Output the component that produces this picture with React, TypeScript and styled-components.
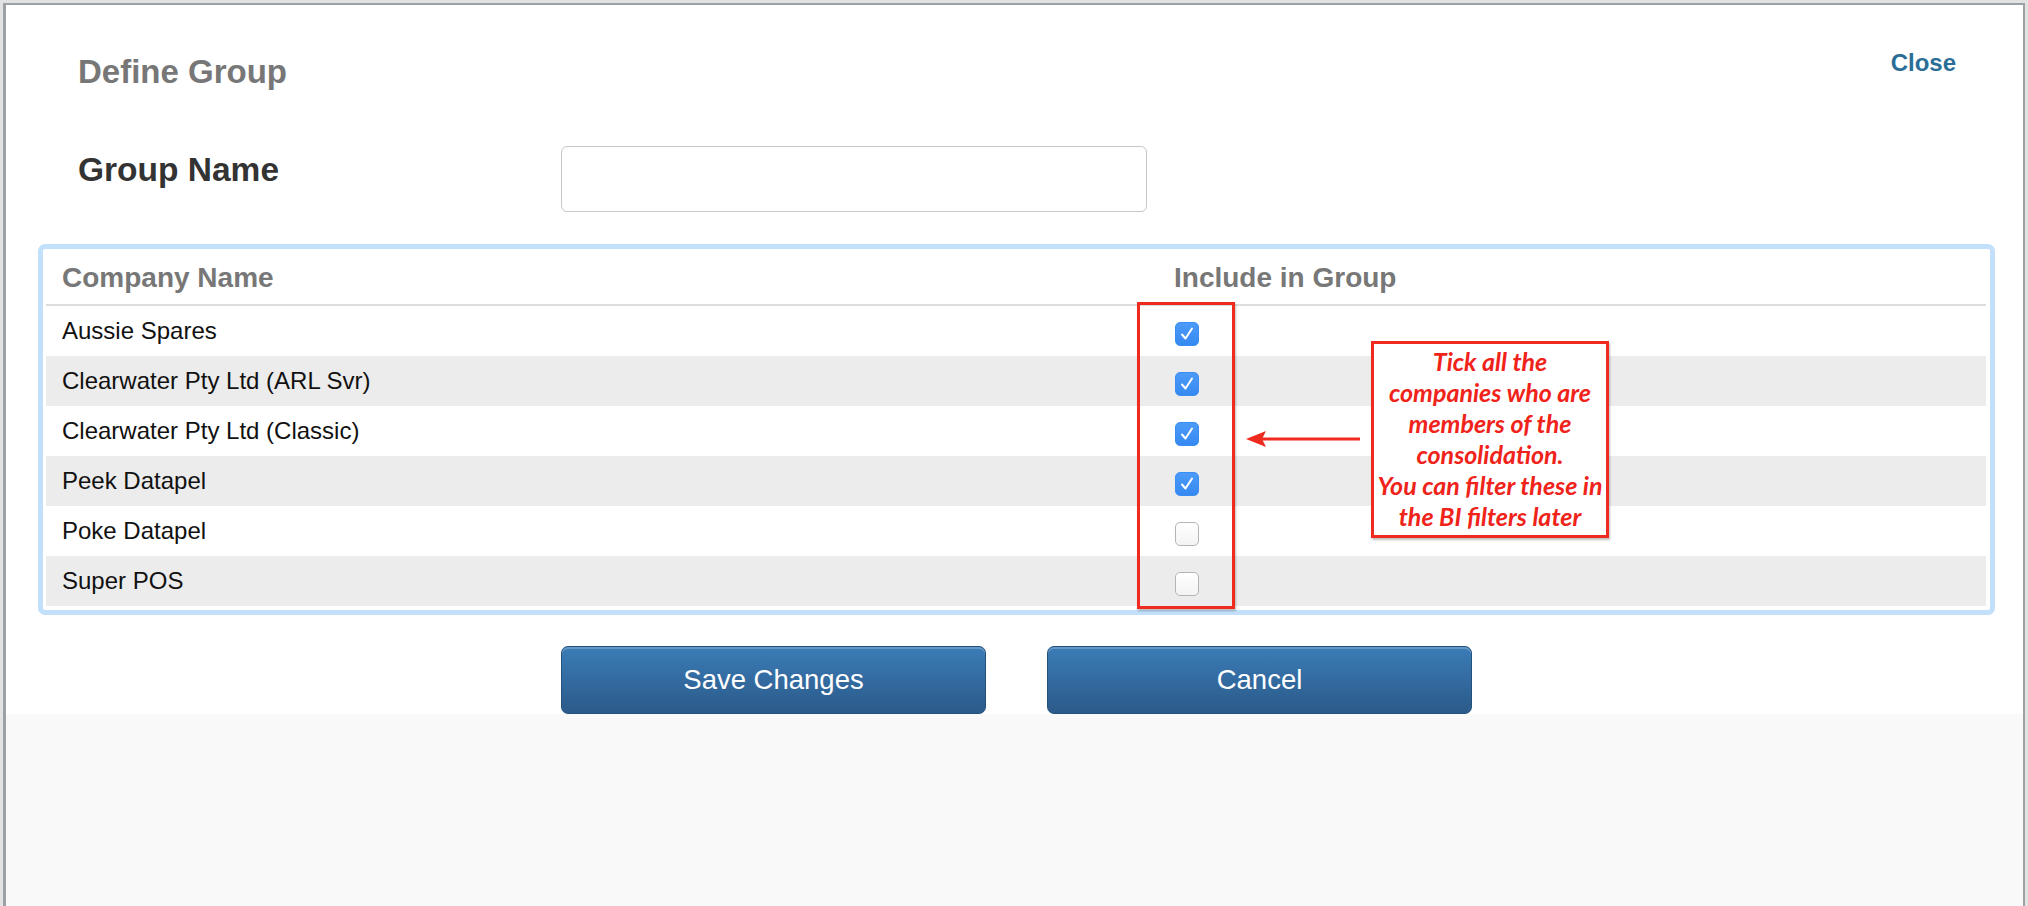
import React from "react";
import styled, { createGlobalStyle } from "styled-components";

const GlobalStyle = createGlobalStyle`
  html, body {
    margin: 0;
    padding: 0;
    background: #e2e2e2;
    font-family: "Liberation Sans", Arial, Helvetica, sans-serif;
  }
  * {
    box-sizing: border-box;
  }
`;

const Frame = styled.div`
  margin: 3px 3px 0 3px;
  border-style: solid;
  border-color: #9ca1a5;
  border-width: 2px 2px 0 3px;
  min-height: calc(100vh - 3px);
  background: #f9f9f9;
`;

const Modal = styled.div`
  background: #ffffff;
`;

const Header = styled.div`
  display: flex;
  justify-content: space-between;
  align-items: flex-start;
  padding: 43px 67px 0 72px;
`;

const Title = styled.h2`
  margin: 0;
  padding-top: 4px;
  font-size: 33px;
  line-height: 40px;
  font-weight: bold;
  color: #777777;
`;

const CloseLink = styled.a`
  font-size: 24px;
  line-height: 30px;
  font-weight: bold;
  color: #2a6e97;
  text-decoration: none;
  cursor: pointer;
`;

const NameRow = styled.div`
  display: flex;
  align-items: flex-start;
  margin-top: 54px;
  padding-left: 72px;
`;

const NameLabel = styled.label`
  width: 483px;
  margin-top: 4px;
  font-size: 33.5px;
  line-height: 40px;
  font-weight: bold;
  color: #333333;
`;

const NameInput = styled.input`
  width: 586px;
  height: 66px;
  border: 1px solid #c8c8c8;
  border-radius: 6px;
  padding: 0 14px;
  font-size: 24px;
  font-family: inherit;
  outline: none;
`;

const Panel = styled.div`
  position: relative;
  margin: 32px 28px 0 32px;
  border: 5px solid #c3e0fb;
  border-radius: 7px;
  padding: 2px 4px 4px 3px;
`;

const HeadRow = styled.div`
  display: grid;
  grid-template-columns: 1112px 1fr;
  height: 55px;
  border-bottom: 2px solid #dddddd;
`;

const HeadCell = styled.div`
  display: flex;
  align-items: center;
  padding-left: 16px;
  font-size: 28px;
  font-weight: bold;
  color: #777777;
`;

const Row = styled.div<{ $striped: boolean }>`
  display: grid;
  grid-template-columns: 1112px 1fr;
  height: 50px;
  background: ${(p) => (p.$striped ? "#ececec" : "#ffffff")};
`;

const Cell = styled.div`
  display: flex;
  align-items: center;
  padding-left: 16px;
  font-size: 24px;
  color: #111111;
`;

const CheckCell = styled.div`
  display: flex;
  align-items: center;
  padding-left: 17px;
  padding-top: 6px;
`;

const Box = styled.span<{ $checked: boolean }>`
  display: inline-flex;
  align-items: center;
  justify-content: center;
  width: 24px;
  height: 24px;
  border-radius: 5px;
  border: 1px solid ${(p) => (p.$checked ? "#3a8ef3" : "#b4b4b4")};
  background: ${(p) =>
    p.$checked
      ? "linear-gradient(#4c9bf8, #3589f1)"
      : "linear-gradient(#ffffff, #f3f3f3)"};
`;

const RedFrame = styled.div`
  position: absolute;
  left: 1094px;
  top: 53px;
  width: 98px;
  height: 307px;
  border: 3px solid #ef2a1f;
  box-shadow: 1px 2px 2px rgba(0, 0, 0, 0.25);
  pointer-events: none;
`;

const Arrow = styled.svg`
  position: absolute;
  left: 1201px;
  top: 179px;
`;

const Note = styled.div`
  position: absolute;
  left: 1328px;
  top: 92px;
  width: 238px;
  height: 197px;
  border: 3px solid #ef2a1f;
  background: #ffffff;
  box-shadow: 1px 2px 2px rgba(0, 0, 0, 0.25);
  padding-top: 2px;
  text-align: center;
  font-family: Lato, "Open Sans", sans-serif;
  font-style: italic;
  font-weight: bold;
  font-size: 25px;
  line-height: 31px;
  color: #f0231a;
  white-space: nowrap;
`;

const Footer = styled.div`
  display: flex;
  gap: 61px;
  margin-top: 31px;
  padding-left: 555px;
`;

const Button = styled.button`
  width: 425px;
  height: 68px;
  border: 1px solid #25527c;
  border-radius: 7px;
  background: linear-gradient(#3b7cb7, #2b5a89);
  box-shadow: inset 0 2px 0 rgba(255, 255, 255, 0.22);
  color: #ffffff;
  font-family: "Liberation Sans", Arial, sans-serif;
  font-size: 27.5px;
  cursor: pointer;
`;

const companies = [
  { name: "Aussie Spares", included: true },
  { name: "Clearwater Pty Ltd (ARL Svr)", included: true },
  { name: "Clearwater Pty Ltd (Classic)", included: true },
  { name: "Peek Datapel", included: true },
  { name: "Poke Datapel", included: false },
  { name: "Super POS", included: false },
];

const noteLines = [
  "Tick all the",
  "companies who are",
  "members of the",
  "consolidation.",
  "You can filter these in",
  "the BI filters later",
];

const Checkbox = ({ checked }: { checked: boolean }) => (
  <Box $checked={checked}>
    {checked && (
      <svg width="18" height="18" viewBox="0 0 18 18">
        <path
          d="M4 9.5 L7.5 13.5 L14 3.5"
          fill="none"
          stroke="#ffffff"
          strokeWidth="2"
          strokeLinecap="round"
          strokeLinejoin="round"
        />
      </svg>
    )}
  </Box>
);

const App = () => {
  return (
    <>
      <GlobalStyle />
      <Frame>
        <Modal>
          <Header>
            <Title>Define Group</Title>
            <CloseLink>Close</CloseLink>
          </Header>

          <NameRow>
            <NameLabel>Group Name</NameLabel>
            <NameInput type="text" />
          </NameRow>

          <Panel>
            <HeadRow>
              <HeadCell>Company Name</HeadCell>
              <HeadCell>Include in Group</HeadCell>
            </HeadRow>
            {companies.map((c, i) => (
              <Row key={c.name} $striped={i % 2 === 1}>
                <Cell>{c.name}</Cell>
                <CheckCell>
                  <Checkbox checked={c.included} />
                </CheckCell>
              </Row>
            ))}

            <RedFrame />
            <Arrow width="120" height="22" viewBox="0 0 120 22">
              <line x1="18" y1="11" x2="116" y2="11" stroke="#ef2a1f" strokeWidth="3" />
              <path d="M2 11 L22 3 L18 11 L22 19 Z" fill="#ef2a1f" />
            </Arrow>
            <Note>
              {noteLines.map((line) => (
                <div key={line}>{line}</div>
              ))}
            </Note>
          </Panel>

          <Footer>
            <Button>Save Changes</Button>
            <Button>Cancel</Button>
          </Footer>
        </Modal>
      </Frame>
    </>
  );
};

export default App;
